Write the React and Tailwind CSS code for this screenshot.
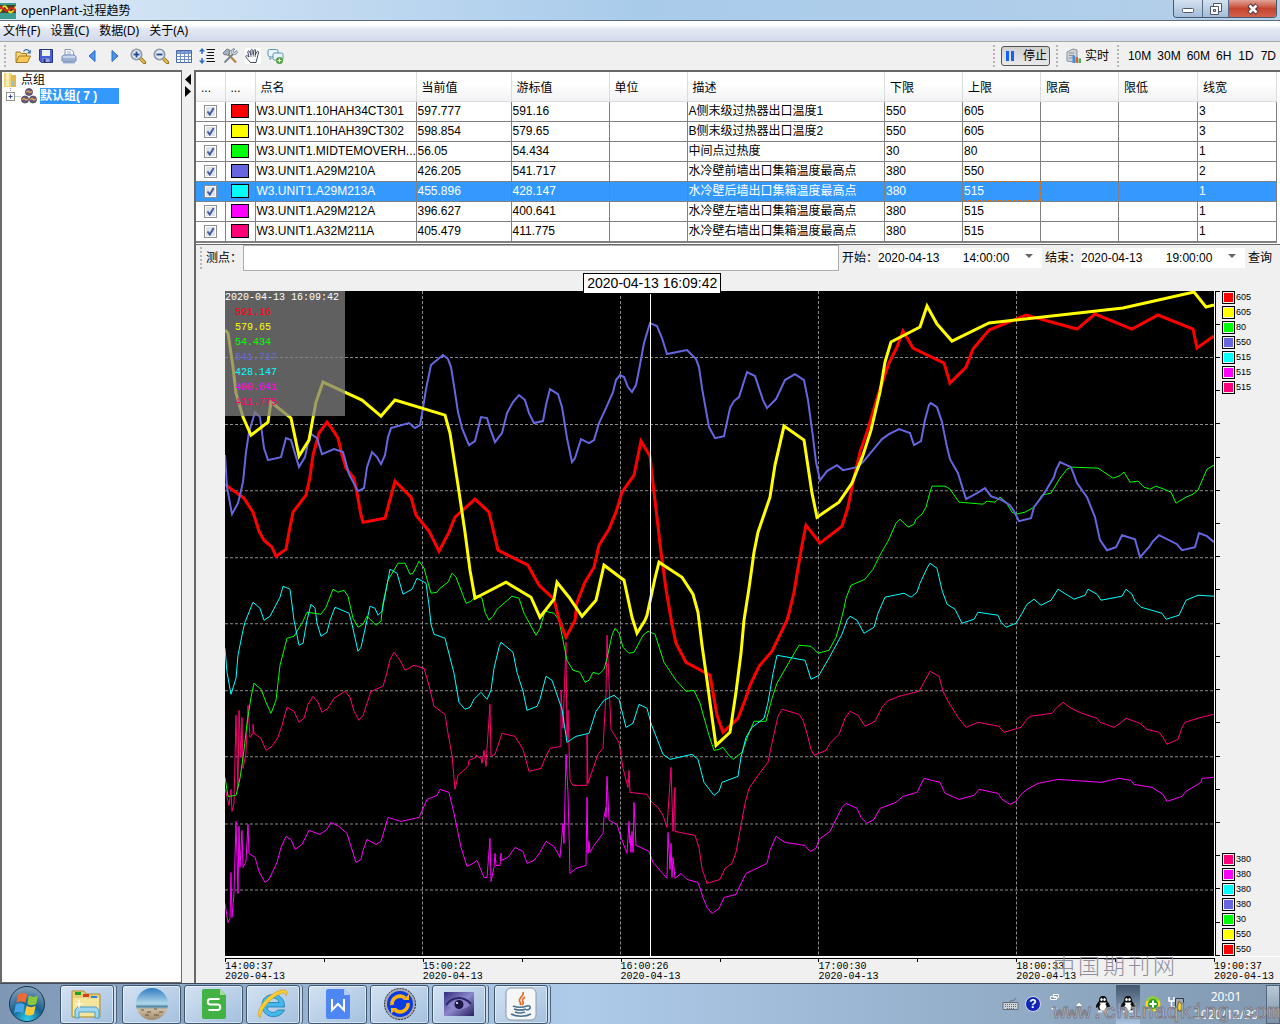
import React from "react";

const SERIES = [
  { color: "#ff0078", w: 1, d: "225,788 229,805 231,789 232,811 234,803 236,715 238,788 239,710 241,757 242,717 243,768 246,753 248,705 250,737 253,733 253,724 254,733 261,738 266,750 272,746 278,737 282,725 287,707 294,711 299,722 304,718 308,704 313,696 318,702 322,712 328,708 334,698 345,691 350,697 354,711 359,720 363,715 371,691 383,686 387,672 390,659 394,652 400,660 405,670 414,665 424,668 429,685 434,706 445,714 448,733 452,755 455,789 458,775 468,766 469,760 476,757 476,755 481,758 482,763 484,750 486,766 487,748 490,704 491,756 495,754 502,733 515,736 523,749 529,771 541,768 545,758 550,748 561,746 561,690 563,728 566,642 567,740 568,710 570,780 573,785 587,785 587,734 588,783 598,754 603,748 606,693 607,635 611,729 619,742 623,768 628,787 629,770 630,792 647,794 652,802 658,807 663,815 667,827 671,767 673,831 675,787 675,831 695,835 699,847 702,868 707,883 720,879 725,868 732,863 736,852 741,825 745,803 749,788 758,775 768,762 771,747 778,716 782,709 799,714 803,720 807,733 811,749 814,755 826,750 830,743 839,734 845,718 850,711 858,715 865,726 875,721 882,707 887,701 899,696 919,691 930,671 939,676 943,691 948,701 958,717 966,727 978,722 999,726 1004,732 1021,727 1026,720 1030,716 1052,713 1057,707 1063,702 1071,708 1082,713 1097,718 1100,722 1114,727 1120,723 1126,718 1140,723 1147,729 1159,732 1163,737 1167,744 1178,739 1182,727 1185,722 1201,717 1214,714" },
  { color: "#ff00ff", w: 1, d: "225,903 228,922 230,918 231,872 232,917 234,893 236,821 238,893 239,826 240,867 242,830 243,867 246,861 248,824 249,853 255,857 259,871 265,882 269,879 277,862 281,847 286,836 291,839 295,849 302,844 309,830 320,834 327,829 331,822 339,826 347,833 350,843 356,862 361,859 363,850 367,839 376,844 381,841 388,817 401,821 419,817 427,799 437,795 440,789 449,792 454,813 461,847 467,866 473,863 477,860 484,877 487,877 490,838 491,881 494,867 495,853 496,865 500,865 501,853 501,860 508,857 515,847 523,851 527,863 534,860 540,852 546,841 554,846 560,857 563,823 564,843 566,754 568,793 570,873 576,868 586,865 587,797 588,853 589,841 590,852 594,845 603,833 604,817 606,807 606,817 607,776 609,820 617,824 621,837 627,853 629,821 630,843 630,835 631,852 632,831 633,852 634,802 636,845 649,851 653,862 667,878 668,832 670,869 671,843 672,877 673,857 675,878 681,873 687,879 698,882 703,897 707,907 712,913 719,908 724,897 736,894 741,883 746,873 767,863 770,850 776,836 785,842 805,845 810,851 816,848 819,839 830,831 842,807 846,803 857,808 861,817 867,823 874,819 880,808 896,802 903,796 917,792 924,778 940,782 945,793 959,799 974,795 979,789 998,793 1002,799 1010,804 1016,801 1021,794 1027,789 1038,783 1058,779 1101,782 1119,778 1131,780 1134,784 1152,787 1163,794 1167,801 1182,796 1186,791 1201,782 1202,778 1214,777" },
  { color: "#00ff00", w: 1, d: "225,777 228,796 236,795 240,778 244,750 247,723 251,697 254,683 261,689 266,702 271,713 276,700 280,665 287,638 294,636 303,621 307,612 321,614 326,607 333,589 338,592 344,590 348,596 353,618 358,627 363,624 367,616 376,625 381,621 383,603 388,580 398,563 405,563 410,574 413,573 419,561 424,568 431,593 437,592 440,588 448,582 452,573 456,577 466,603 471,601 477,595 482,598 485,612 489,620 493,616 497,609 512,596 519,598 524,613 536,635 540,628 545,611 554,613 559,620 567,660 573,670 580,672 585,682 589,680 593,672 599,674 604,669 607,658 612,635 615,628 619,633 623,647 629,653 634,652 643,635 648,631 655,634 664,662 676,680 686,691 694,690 700,703 709,735 714,750 719,749 723,747 729,755 733,759 742,752 748,735 754,721 766,721 772,698 777,683 789,662 799,645 811,646 818,653 829,650 836,637 841,620 844,608 846,598 851,585 865,579 873,569 881,553 888,541 896,523 900,519 908,527 914,524 916,519 922,514 926,507 930,492 932,486 945,486 950,489 959,502 983,504 987,501 995,502 1000,497 1006,502 1012,512 1016,514 1025,512 1034,507 1042,495 1051,493 1060,478 1067,469 1072,467 1098,468 1113,478 1119,476 1124,472 1130,482 1138,481 1144,487 1150,489 1156,486 1164,489 1171,492 1176,503 1186,497 1193,494 1198,490 1203,478 1207,469 1214,465" },
  { color: "#00ffff", w: 1, d: "225,648 227,672 231,694 236,678 238,655 243,630 245,622 253,602 260,608 264,620 270,616 280,597 283,586 290,589 294,620 299,645 303,643 307,620 311,604 315,608 317,623 321,636 327,632 330,620 335,607 349,613 352,624 358,651 361,647 367,620 370,606 375,608 378,615 382,611 387,585 390,569 397,573 403,594 412,589 417,578 426,583 429,605 431,624 434,634 445,638 454,673 459,702 465,709 470,707 474,699 481,692 487,699 491,690 494,668 499,647 501,642 513,652 517,672 523,691 527,710 537,706 540,699 546,676 552,680 562,709 567,742 576,736 589,733 596,711 604,700 614,695 619,699 626,727 633,723 639,704 647,708 651,723 663,754 670,759 692,754 698,759 704,782 714,795 719,791 722,782 738,776 741,757 746,737 752,727 764,718 768,702 773,673 777,655 805,660 811,679 819,675 830,656 842,634 847,620 850,616 857,620 864,633 874,627 878,613 885,597 904,593 911,597 917,592 920,583 927,568 930,563 937,568 942,590 947,604 955,609 962,623 974,619 978,612 998,615 1001,622 1006,627 1016,623 1022,613 1027,604 1034,599 1041,605 1051,600 1058,589 1074,599 1085,595 1088,589 1097,594 1101,600 1122,596 1126,589 1132,594 1135,601 1141,607 1162,613 1166,619 1179,615 1186,600 1198,595 1214,596" },
  { color: "#ff0000", w: 3, d: "225,484 230,488 244,498 253,512 259,531 264,540 272,547 276,556 286,549 289,532 293,512 306,495 310,477 313,455 319,433 327,422 333,430 338,438 342,455 346,468 354,478 357,493 361,515 363,522 385,518 395,481 411,497 416,515 429,531 439,551 449,532 455,517 475,499 489,512 494,533 498,550 528,565 539,585 554,599 559,619 566,637 575,620 577,602 585,582 594,567 599,545 609,529 616,512 622,492 634,475 641,441 650,456 654,492 661,552 666,589 672,624 676,643 686,662 710,675 717,715 723,732 738,718 745,700 750,685 759,666 772,651 787,620 789,613 794,592 798,568 802,545 806,525 820,543 842,526 848,507 853,482 860,452 867,432 878,395 889,363 897,347 903,331 913,348 944,363 950,383 966,367 973,349 989,330 1026,315 1077,329 1095,314 1132,329 1158,315 1193,329 1197,348 1214,336" },
  { color: "#6666e0", w: 2, d: "225,455 227,487 232,514 238,503 243,482 246,452 249,432 255,412 260,417 264,448 268,460 281,457 286,438 291,440 299,467 305,457 310,433 317,438 322,454 334,449 343,452 349,474 358,491 364,488 367,467 372,452 377,457 381,464 385,455 388,437 391,428 409,423 415,428 420,425 423,408 426,389 431,365 443,355 448,359 451,367 455,392 458,412 462,428 469,445 475,441 481,417 487,418 490,428 495,442 502,433 507,413 513,402 519,395 525,400 529,413 534,423 543,421 546,405 550,389 558,394 562,407 567,438 572,462 575,458 581,439 589,443 594,440 599,423 606,408 613,392 616,380 620,375 624,377 628,387 632,392 636,385 639,370 644,343 650,323 657,326 662,338 667,354 687,350 696,359 699,367 702,388 709,427 715,438 724,436 730,408 734,401 739,397 747,372 755,376 763,400 767,408 776,399 785,380 795,374 804,380 808,400 813,437 816,462 820,480 827,471 837,465 843,470 857,467 863,462 882,439 889,434 899,429 910,433 914,445 921,441 925,420 929,405 931,403 937,407 942,422 947,447 950,459 958,473 966,499 977,493 985,488 991,496 1002,500 1010,505 1014,511 1019,521 1031,518 1034,507 1043,495 1054,477 1056,470 1060,462 1071,467 1077,483 1087,497 1095,517 1100,540 1107,550 1116,547 1122,535 1135,539 1140,557 1149,547 1153,541 1159,535 1177,544 1182,550 1195,547 1199,533 1207,536 1214,542" },
  { color: "#ffff00", w: 3, d: "225,330 228,333 233,367 236,393 243,417 251,435 268,422 271,402 291,418 299,456 309,440 313,418 316,402 323,382 362,400 381,416 395,400 445,415 450,433 458,485 465,532 470,570 475,598 506,582 531,597 540,617 554,599 557,582 569,597 582,616 596,600 604,565 624,580 632,617 637,633 645,620 647,615 655,578 659,562 682,577 693,594 698,612 702,645 707,680 712,717 716,745 730,732 736,692 741,653 744,620 749,588 754,552 758,532 770,497 775,465 784,426 804,440 812,493 817,517 839,502 852,483 863,455 871,430 880,392 885,362 891,342 920,327 927,306 937,324 952,341 989,323 1123,308 1194,292 1206,307 1214,305" },
];

const ROWS = [
  { c: "#ff0000", v: ["W3.UNIT1.10HAH34CT301", "597.777", "591.16", "", "A侧末级过热器出口温度1", "550", "605", "", "", "3"] },
  { c: "#ffff00", v: ["W3.UNIT1.10HAH39CT302", "598.854", "579.65", "", "B侧末级过热器出口温度2", "550", "605", "", "", "3"] },
  { c: "#00ff00", v: ["W3.UNIT1.MIDTEMOVERH...", "56.05", "54.434", "", "中间点过热度", "30", "80", "", "", "1"] },
  { c: "#6666e0", v: ["W3.UNIT1.A29M210A", "426.205", "541.717", "", "水冷壁前墙出口集箱温度最高点", "380", "550", "", "", "2"] },
  { c: "#00ffff", v: ["W3.UNIT1.A29M213A", "455.896", "428.147", "", "水冷壁后墙出口集箱温度最高点", "380", "515", "", "", "1"], sel: true },
  { c: "#ff00ff", v: ["W3.UNIT1.A29M212A", "396.627", "400.641", "", "水冷壁左墙出口集箱温度最高点", "380", "515", "", "", "1"] },
  { c: "#ff0078", v: ["W3.UNIT1.A32M211A", "405.479", "411.775", "", "水冷壁右墙出口集箱温度最高点", "380", "515", "", "", "1"] },
];
const HEADS = ["点名", "当前值", "游标值", "单位", "描述", "下限", "上限", "限高", "限低", "线宽"];
const COLS = ["w-[29px]", "w-[30px]", "w-[161px]", "w-[95px]", "w-[98px]", "w-[78px]", "w-auto", "w-[78px]", "w-[78px]", "w-[78px]", "w-[79px]", "w-[79px]"];
const TIMES = ["14:00:37", "15:00:22", "16:00:26", "17:00:30", "18:00:33"];
const HOURS = [422.5, 620.5, 818.5, 1016.5];
const LEVELS = [357.5, 424.5, 490.5, 557.5, 623.5, 690.5, 756.5, 823.5, 889.5];

function Svg({ children, w = 16, h = 16, vb, className = "" }) {
  return (
    <svg width={w} height={h} viewBox={vb || `0 0 ${w} ${h}`} className={"block shrink-0 " + className} aria-hidden="true">
      {children}
    </svg>
  );
}

function Grip() {
  return (
    <Svg w={2} h={24} className="mx-1">
      {[0, 4, 8, 12, 16, 20].map((y) => (
        <rect key={y} x="0" y={y + 1} width="2" height="2" fill="#b5b5b5" />
      ))}
    </Svg>
  );
}

function Tool({ label, children }) {
  return (
    <button type="button" aria-label={label} className="flex h-6 w-[23px] items-center justify-center">
      {children}
    </button>
  );
}

function Lens({ plus }) {
  return (
    <Svg>
      <path d="M10 10l4.5 4.5" stroke="#8d6a22" strokeWidth="3.6" strokeLinecap="round" />
      <path d="M10.2 10.2l4 4" stroke="#f0b83c" strokeWidth="2" strokeLinecap="round" />
      <circle cx="6.5" cy="6.5" r="5.2" fill="#dfe9f2" stroke="#8d99a6" strokeWidth="1.6" />
      <path d="M3.5 6.5h6" stroke="#20489a" strokeWidth="1.8" />
      {plus && <path d="M6.5 3.5v6" stroke="#20489a" strokeWidth="1.8" />}
    </Svg>
  );
}

function Toolbar() {
  return (
    <div className="flex h-[28px] shrink-0 items-center bg-[#f0f0f0]">
      <Grip />
      <div className="flex flex-1 items-center pl-px">
        <Tool label="打开">
          <Svg>
            <path d="M1 14V4h4l1.500 1.500h5V8" fill="#f7d878" stroke="#a87820" />
            <path d="M1 14.500L4 8h11.500l-3 6.500z" fill="#fbc954" stroke="#a87820" />
            <path d="M8.500 3.500c1.500-2.500 4-2.500 5.500-.5" fill="none" stroke="#3c6ca8" strokeWidth="1.300" />
            <path d="M15.800 1.500v4h-4z" fill="#3c6ca8" />
          </Svg>
        </Tool>
        <Tool label="保存">
          <Svg>
            <path d="M1.500 1.500h13v13h-11l-2-2z" fill="#4a5fd0" stroke="#27348c" />
            <path d="M4 2h8v6H4z" fill="#eef2fc" />
            <path d="M4.500 10.500h7V14h-7z" fill="#9aa6e4" />
            <path d="M5.500 11h2v3h-2z" fill="#1d2768" />
          </Svg>
        </Tool>
        <Tool label="打印">
          <Svg>
            <path d="M4 8V1.500h6L12.500 4v4" fill="#fff" stroke="#8395b5" />
            <path d="M6 4h4M6 6h4" stroke="#9cb0d0" />
            <path d="M1 8.500l2-1.500h10l2 1.500v4.500H1z" fill="#c8d8ee" stroke="#6c86b4" />
            <path d="M1.500 11h13" stroke="#6c86b4" />
            <path d="M2.500 13.500h11v1.500h-11z" fill="#a4bbdc" stroke="#6c86b4" strokeWidth=".6" />
          </Svg>
        </Tool>
        <Tool label="后退">
          <Svg><path d="M11 2.500v11L5 8z" fill="#4b94ea" stroke="#2468c0" /></Svg>
        </Tool>
        <Tool label="前进">
          <Svg><path d="M5 2.500v11L11 8z" fill="#4b94ea" stroke="#2468c0" /></Svg>
        </Tool>
        <Tool label="放大"><Lens plus /></Tool>
        <Tool label="缩小"><Lens /></Tool>
        <Tool label="表格">
          <Svg>
            <path d="M.5 2.500h15v12H.5z" fill="#fff" stroke="#47669e" />
            <path d="M1 3h14v2.500H1z" fill="#7d9ed8" />
            <path d="M.5 8.500h15M.5 11.500h15M.5 5.500h15M4.500 3v11.500M8.500 3v11.500M12.500 3v11.500" stroke="#6f8fc6" />
          </Svg>
        </Tool>
        <Tool label="排序">
          <Svg>
            <path d="M3 1v5M3 10v5" stroke="#2a6cc8" strokeWidth="1.500" />
            <path d="M3 0l3 3.500H0zM3 16l3-3.500H0z" fill="#2a6cc8" />
            <path d="M7.500 1.500H16M8.500 4.500H15M7.500 7.500H15M7.500 10.500H15M7.500 13.500H16" stroke="#111" strokeWidth="1.200" />
          </Svg>
        </Tool>
        <Tool label="工具">
          <Svg>
            <path d="M6 6l8 8.500" stroke="#b98546" strokeWidth="2.200" />
            <path d="M1 5l4-4 3.500 1.500-1.500 1.500 1 1-2.500 2.500-1.500-1L2.500 7z" fill="#a4b0be" stroke="#5d6874" strokeWidth=".8" />
            <path d="M2.500 14.500L11 6" stroke="#7a8692" strokeWidth="2" />
            <path d="M14.500 2.500L12.500 4.500 11 3l2-2c-3-.8-4.500 2-3.500 4s4.500 2.500 6-.5z" fill="#c6d0da" stroke="#66727e" strokeWidth=".7" />
          </Svg>
        </Tool>
        <Tool label="平移">
          <Svg className="bg-white">
            <path d="M5.500 14.500C4 12.500 1 10 .8 8.500.8 7.300 2.200 7.300 4 9L2.800 4.200c-.2-1.500 1.300-1.800 1.800-.4L6 7 5.800 2.500C5.800 1 7.500 1 7.700 2.500L8.200 6.500l.8-4C9.300 1 10.900 1.300 10.700 2.900L10.200 7l1.700-3c.8-1.300 2.200-.5 1.700.8-.8 2-1.200 4-1.600 6.200l-1 3.500z" fill="#fff" stroke="#2d3450" strokeWidth=".9" />
            <path d="M6 7v2M8.200 6.500v2M10.200 7v2" stroke="#2d3450" strokeWidth=".7" />
          </Svg>
        </Tool>
        <Tool label="备注">
          <Svg w={17} h={17}>
            <rect x="1" y="1.500" width="10" height="7" rx="1.500" fill="#e8f3fa" stroke="#5b93b4" />
            <path d="M3 8.500v3l3-3" fill="#e8f3fa" stroke="#5b93b4" />
            <rect x="6" y="5" width="10" height="7" rx="1.500" fill="#e8f3fa" stroke="#5b93b4" />
            <circle cx="12.500" cy="12.500" r="3.500" fill="#4ca03c" />
            <path d="M12.500 10.500v4M10.500 12.500h4" stroke="#fff" strokeWidth="1.200" />
          </Svg>
        </Tool>
      </div>
      <Grip />
      <button type="button" className="mx-[2px] flex h-5 w-[49px] items-center gap-2 rounded-[3px] border border-[#555] bg-gradient-to-b from-[#cfcfcf] to-[#e9e9e9] pl-1">
        <Svg w={9} h={10}><path d="M0 0h3v10H0zM5 0h3v10H5z" fill="#1560f0" /></Svg>
        <span>停止</span>
      </button>
      <Grip />
      <button type="button" className="flex items-center gap-1 pr-1 pl-1">
        <Svg w={15}>
          <path d="M1 4l6-3 4 1v10l-4 2-6-1z" fill="#cdd2d6" stroke="#8d9499" />
          <path d="M3 5h5M3 7.500h5M3 10h5" stroke="#8d9499" />
          <path d="M6.500 7.500h2.500V15H6.500z" fill="#3f8fe8" />
          <path d="M9.500 9H12v6H9.500z" fill="#e85a30" />
          <path d="M12.500 10.500H15V15h-2.500z" fill="#49b04c" />
        </Svg>
        <span>实时</span>
      </button>
      <Grip />
      <div className="flex items-center pl-[2px]">
        {["10M", "30M", "60M"].map((t) => (
          <button type="button" key={t} className="px-[3px]">{t}</button>
        ))}
        {["6H", "1D", "7D"].map((t) => (
          <button type="button" key={t} className="pr-1 pl-[3px]">{t}</button>
        ))}
      </div>
    </div>
  );
}

function TitleBar() {
  return (
    <header className="flex h-[21px] shrink-0 items-start border-b border-[#5c6b7a] bg-gradient-to-r from-[#dbe9f6] via-[#a9cbeb] to-[#b4cfe9]">
      <Svg className="mt-[3px]">
        <path d="M0 0h16v16H0z" fill="#3c9d90" />
        <path d="M0 2h16v8H0z" fill="#45432a" />
        <path d="M0 9c4-9 6-6 8-2s5 3 8-4" fill="none" stroke="#f0e21c" strokeWidth="1.800" />
        <path d="M0 4c3 0 4 6 8 3s5-3 8 2" fill="none" stroke="#e0261c" strokeWidth="1.800" />
      </Svg>
      <h1 className="flex-1 pl-[5px] font-['Noto_Sans','Noto_Sans_CJK_SC',sans-serif] leading-[21px] font-normal">openPlant-过程趋势</h1>
      <div className="mr-[3px] flex h-[18px] overflow-hidden rounded-b-[4px] border border-t-0 border-[#47586e]">
        <button type="button" aria-label="最小化" className="flex w-[29px] items-center justify-center border-r border-[#5a6c84] bg-gradient-to-b from-[#d4e1ef] to-[#a3bdd8]">
          <Svg w={14} h={14}><rect x="1.500" y="6.500" width="11" height="4" rx="1" fill="#fff" stroke="#505866" /></Svg>
        </button>
        <button type="button" aria-label="还原" className="flex w-[26px] items-center justify-center border-r border-[#5a6c84] bg-gradient-to-b from-[#d4e1ef] to-[#a3bdd8]">
          <Svg w={14} h={14}>
            <path d="M4.500 1.500h8v8h-8z" fill="#fff" stroke="#505866" />
            <path d="M1.500 4.500h8v8h-8z" fill="#fff" stroke="#505866" />
            <path d="M4.500 7.500h2v2h-2z" fill="#a9c0d8" stroke="#505866" />
          </Svg>
        </button>
        <button type="button" aria-label="关闭" className="flex w-[47px] items-center justify-center bg-gradient-to-b from-[#e0a498] via-[#c5452f] to-[#d2604c]">
          <Svg w={14} h={14}>
            <path d="M3 3l8 8M11 3l-8 8" stroke="#4c3340" strokeWidth="4.600" />
            <path d="M3.500 3.500l7 7M10.500 3.500l-7 7" stroke="#fff" strokeWidth="2.600" />
          </Svg>
        </button>
      </div>
    </header>
  );
}

function Tree() {
  return (
    <aside className="w-[182px] shrink-0 border-2 border-r border-b border-[#696969] bg-white">
      <ul className="pl-px">
        <li>
          <div className="flex h-4 items-center gap-[2px]">
            <Svg>
              <path d="M1 1h7l1 2v12H1z" fill="#f2d573" />
              <path d="M8 3h5v12H8z" fill="#e3b84c" />
              <path d="M3 1h3v13H3z" fill="#fbeeb4" />
              <path d="M9 9h2v5H9z" fill="#8ac4e4" />
            </Svg>
            <span>点组</span>
          </div>
          <ul>
            <li className="flex h-4 items-center pl-[3px]">
              <Svg w={15} h={16}>
                <path d="M4.500 0v4M9.500 8.500H15" stroke="#999" strokeDasharray="1 1" />
                <rect x=".5" y="4.500" width="8" height="8" fill="#fff" stroke="#919191" />
                <path d="M2.500 8.500h4M4.500 6.500v4" stroke="#2c4a9c" />
              </Svg>
              <Svg>
                {[[8, 4], [4, 11.500], [12, 11.500]].map(([x, y]) => (
                  <g key={x}>
                    <circle cx={x} cy={y} r="3.600" fill="#665a78" stroke="#3a3248" strokeWidth=".6" />
                    <path d={`M${x - 3} ${y}l2-1 2 1.500 2-1`} fill="none" stroke="#f0a858" strokeWidth="1.300" />
                  </g>
                ))}
              </Svg>
              <a href="#group" className="ml-[3px] block h-4 w-[79px] bg-[#3399ff] leading-4 font-bold whitespace-pre text-white">默认组( 7 )</a>
            </li>
          </ul>
        </li>
      </ul>
    </aside>
  );
}

function PointTable() {
  return (
    <table className="w-full table-fixed border-collapse border-b-2 border-[#808080] bg-white">
      <colgroup>
        {COLS.map((c, i) => <col key={i} className={c} />)}
      </colgroup>
      <thead>
        <tr className="h-[29px] bg-gradient-to-b from-white from-40% to-[#f1f2f4]">
          {["...", "..."].concat(HEADS).map((h, i) => (
            <th key={i} className="border-r border-b border-[#dcdcdc] p-0 pt-1 pl-[5px] text-left font-normal">{h}</th>
          ))}
        </tr>
      </thead>
      <tbody>
        {ROWS.map((r) => (
          <tr key={r.c} className={r.sel ? "h-5 bg-[#3399ff] text-white" : "h-5"}>
            <td className="border border-l-0 border-[#808080] p-0">
              <label className="relative mx-auto block size-[13px]">
                <input type="checkbox" defaultChecked aria-label={r.v[0]} className="block size-[13px] appearance-none border border-[#8e8f8f] bg-[#dfe4ea] shadow-[inset_0_0_0_1px_#fff]" />
                <Svg w={13} h={13} className="pointer-events-none absolute inset-0">
                  <path d="M3.500 6.500l2.300 3L9.700 3" fill="none" stroke="#41599c" strokeWidth="1.900" />
                </Svg>
              </label>
            </td>
            <td className="border border-[#808080] p-0">
              <div className="mx-auto h-[14px] w-[18px] border border-black" style={{ background: r.c }} />
            </td>
            {r.v.map((t, i) => (
              <td key={i} className={"border border-[#808080] p-0 pl-px leading-[19px] whitespace-nowrap" + (r.sel && i === 6 ? " relative z-10 outline-1 -outline-offset-1 outline-dashed outline-[#e07000]" : "")}>
                {t}
              </td>
            ))}
          </tr>
        ))}
      </tbody>
    </table>
  );
}

function When({ label, id, value }) {
  return (
    <div className="flex shrink-0 items-center">
      <label htmlFor={id} className="w-[36px] whitespace-nowrap">{label}</label>
      <div className="relative">
        <select id={id} className="block h-5 w-[164px] appearance-none bg-white">
          <option>{value}</option>
        </select>
        <Svg w={8} h={4} className="pointer-events-none absolute top-[6px] right-[9px]"><path d="M0 0h8L4 4z" fill="#666" /></Svg>
      </div>
    </div>
  );
}

function Keys({ items }) {
  return (
    <ul className="flex flex-col gap-[2px]">
      {items.map(([c, t]) => (
        <li key={c} className="flex h-[13px] items-start">
          <span className="block size-[13px] border border-black p-px"><span className="block size-full" style={{ background: c }} /></span>
          <span className="pl-px text-[9px] leading-[13px]">{t}</span>
        </li>
      ))}
    </ul>
  );
}

function Chart() {
  return (
    <div className="flex min-h-0 flex-1 flex-col pt-[19px] pl-[29px]">
      <div className="flex min-h-0 flex-1">
        <div className="relative flex min-w-0 flex-1 bg-black">
          <svg viewBox="225 291 989 665" preserveAspectRatio="none" className="block h-full min-h-0 w-full" role="img" aria-label="过程趋势">
            <g stroke="#8c8c8c" strokeDasharray="3 2">
              {HOURS.map((x) => <path key={x} d={`M${x} 291V956`} />)}
              {LEVELS.map((y) => <path key={y} d={`M225 ${y}H1214`} />)}
            </g>
            {SERIES.map((s) => (
              <polyline key={s.color} points={s.d} fill="none" stroke={s.color} strokeWidth={s.w} vectorEffect="non-scaling-stroke" />
            ))}
            <path d="M650.500 293V956" stroke="#fff" />
          </svg>
          <div className="absolute top-0 left-0 h-[125px] w-[120px] bg-[#808080]/75 font-['Liberation_Mono',monospace] text-[10px] leading-[15px] whitespace-nowrap">
            <p className="-mt-px text-white">2020-04-13 16:09:42</p>
            {ROWS.map((r) => <p key={r.c} className="pl-[10px]" style={{ color: r.c }}>{r.v[2]}</p>)}
          </div>
          <div className="absolute -top-[18px] left-[43.2%] -translate-x-1/2 border border-black bg-white px-[3px] text-[14px] leading-[19px] whitespace-nowrap">
            2020-04-13 16:09:42
          </div>
        </div>
        <div className="flex w-[66px] shrink-0 border-l border-white">
          <div className="flex w-[5px] flex-col border-b border-l border-black">
            {Array.from({ length: 20 }, (_, i) => (
              <div key={i} className="flex-1 border-t border-black" />
            ))}
          </div>
          <div className="flex flex-col justify-between pl-[2px]">
            <Keys items={ROWS.map((r) => [r.c, r.v[6]])} />
            <Keys items={ROWS.map((r) => [r.c, r.v[5]]).reverse()} />
          </div>
        </div>
      </div>
      <div className="relative h-[27px] shrink-0 border-t border-white">
        <div className="mt-px mr-[65px] flex h-1 border-t border-r border-black">
          {Array.from({ length: 10 }, (_, i) => (
            <div key={i} className="flex-1 border-l border-black" />
          ))}
        </div>
        <div className="flex font-['Liberation_Mono',monospace] text-[10px] leading-[10px] whitespace-nowrap">
          {TIMES.map((t) => (
            <p key={t} className="min-w-0 flex-1">{t}<br />2020-04-13</p>
          ))}
          <p className="w-[66px]">19:00:37<br />2020-04-13</p>
        </div>
        <div className="absolute -top-[8px] right-[105px] flex gap-[3px] font-['Noto_Sans_CJK_SC',sans-serif] text-[22px] leading-[30px] font-light text-[#8e8e9c]">
          {"中国期刊网".split("").map((c) => <span key={c}>{c}</span>)}
        </div>
      </div>
    </div>
  );
}

function Task({ label, wide, stacked, children }) {
  return (
    <button
      type="button"
      aria-label={label}
      className={
        "flex h-[39px] items-center justify-center rounded-[3px] border border-[#3f566f] bg-gradient-to-br from-[#d3e2f2] to-[#a4c0de] ring-1 ring-white/50 ring-inset " +
        (wide ? "w-[59px] " : "w-[54px] ") +
        (stacked ? "mr-[5px] shadow-[2px_0_0_#c4d8ee,3px_0_0_#4d647e]" : "")
      }
    >
      {children}
    </button>
  );
}

function Penguin() {
  return (
    <Svg w={16} h={18}>
      <path d="M8 1c3 0 4 2 4 5 2 2 3.500 5 3 7l-2-1c0 1-.5 2-1 3H4c-.5-1-1-2-1-3l-2 1c-.5-2 1-5 3-7 0-3 1-5 4-5z" fill="#0c0c0c" />
      <ellipse cx="8" cy="12" rx="3.500" ry="3.500" fill="#fff" />
      <ellipse cx="6.500" cy="4.500" rx="1.200" ry="1.500" fill="#fff" />
      <ellipse cx="9.500" cy="4.500" rx="1.200" ry="1.500" fill="#fff" />
      <path d="M4.500 7.500h7l-1 1.500h-5z" fill="#fff" />
      <path d="M3 15.500h4v2H3zM9 15.500h4v2H9z" fill="#e8e8e8" />
    </Svg>
  );
}

function Taskbar() {
  return (
    <footer className="relative flex h-[41px] shrink-0 items-center gap-[3px] overflow-hidden border-t border-[#3e4c5e] bg-gradient-to-r from-[#7e97b4] via-[#aecbea] via-45% to-[#8199b1]">
      <button type="button" aria-label="开始" className="mr-[11px] ml-2">
        <Svg w={38} h={38}>
          <defs>
            <radialGradient id="orb" cx=".5" cy=".95" r=".9">
              <stop offset="0" stopColor="#2fd0f0" />
              <stop offset=".5" stopColor="#17618e" />
              <stop offset="1" stopColor="#7c9cb8" />
            </radialGradient>
          </defs>
          <circle cx="19" cy="19" r="17.500" fill="url(#orb)" stroke="#17344e" />
          <g transform="translate(-3 -3.800) scale(1.200)">
            <path d="M11 11c3-1.500 5-1.500 7.500 0l-1.500 7c-2.500-1.500-5-1.500-7.500 0z" fill="#ee6a34" />
            <path d="M20 12c2.500 1.500 5 1.500 7.500 0L26 19c-2.500 1.500-5 1.500-7.500 0z" fill="#8cc83c" />
            <path d="M9 19.500c2.500-1.500 5-1.500 7.500 0L15 26.500c-2.500-1.500-5-1.500-7.500 0z" fill="#48a4e8" />
            <path d="M18 20.500c2.500 1.500 5 1.500 7.500 0l-1.500 7c-2.500 1.500-5 1.500-7.500 0z" fill="#fcc93c" />
          </g>
        </Svg>
      </button>
      <Task label="资源管理器" stacked>
        <Svg w={34} h={32}>
          <path d="M2 3h12l2 3h14v23H2z" fill="#e9cf74" stroke="#b09030" />
          <path d="M5 4h6v3H5z" fill="#22a02c" /><path d="M13 6h6v3h-6z" fill="#d8401c" /><path d="M21 8h6v3h-6z" fill="#2c84d8" />
          <path d="M3 10h26v18H3z" fill="#f5e49c" />
          <path d="M5 30V22l3-3h18l3 3v8h-4v-6H9v6z" fill="#9cd8f0" stroke="#4f9cc4" />
          <path d="M9 12v8M5 16h8" stroke="#fff" strokeWidth="1.200" />
        </Svg>
      </Task>
      <Task label="海滩" wide>
        <Svg w={32} h={32}>
          <defs>
            <linearGradient id="sea" x1="0" y1="0" x2="0" y2="1">
              <stop offset="0" stopColor="#2f7cc4" /><stop offset=".5" stopColor="#b4d8ea" />
              <stop offset=".58" stopColor="#4d87a8" /><stop offset=".66" stopColor="#d0c0a4" /><stop offset="1" stopColor="#a08868" />
            </linearGradient>
          </defs>
          <circle cx="16" cy="16" r="16" fill="url(#sea)" />
          <path d="M5 22h3m3 2h4m3-3h3m2 3h4M9 27h4m5 0h5" stroke="#6a5444" />
        </Svg>
      </Task>
      <Task label="表格" wide>
        <Svg w={26} h={32}>
          <path d="M3 1h16l6 6v22a2 2 0 0 1-2 2H3a2 2 0 0 1-2-2V3a2 2 0 0 1 2-2z" fill="#43b244" />
          <path d="M19 1v6h6z" fill="#a4dca0" />
          <path d="M18.500 11h-9a2.500 2.500 0 0 0 0 5.500h7a2.500 2.500 0 0 1 0 5.500h-9" fill="none" stroke="#fff" strokeWidth="2" />
        </Svg>
      </Task>
      <Task label="浏览器" stacked>
        <Svg w={32} h={32}>
          <path d="M24 19H10c.5 6 8 7 10.500 3h7C23 32 5 31 5 17S27 3 27.500 17v2zM10 14.500h12c-1-6-11-6-12 0z" fill="#45b8ea" stroke="#1c78b4" strokeWidth=".8" />
          <path d="M3 30C-3 24 10 5 25 2c5-1 6 2 4 6 0-3-2-4-6-2C13 10 4 21 3 30z" fill="#f9cf32" stroke="#d89c18" strokeWidth=".7" />
        </Svg>
      </Task>
      <Task label="文字" wide>
        <Svg w={26} h={32}>
          <path d="M3 1h16l6 6v22a2 2 0 0 1-2 2H3a2 2 0 0 1-2-2V3a2 2 0 0 1 2-2z" fill="#4e87f4" />
          <path d="M19 1v6h6z" fill="#b0ccfc" />
          <path d="M7 11v11l6-6 6 6V11" fill="none" stroke="#fff" strokeWidth="2" />
        </Svg>
      </Task>
      <Task label="同步" wide>
        <Svg w={34} h={34}>
          <circle cx="17" cy="17" r="15.500" fill="#a8a8b0" stroke="#222" strokeDasharray="2 1" />
          <circle cx="17" cy="17" r="13" fill="#0c3ce0" />
          <path d="M9 18a8 8 0 0 1 13-7M25 16a8 8 0 0 1-13 7" fill="none" stroke="#fcb414" strokeWidth="3.600" />
          <path d="M20 13h6V7zM14 21H8v6z" fill="#fcb414" />
        </Svg>
      </Task>
      <Task label="图像" stacked>
        <Svg w={30} h={24}>
          <defs>
            <linearGradient id="eye" x1="0" y1="0" x2="1" y2="1"><stop offset="0" stopColor="#302c80" /><stop offset=".5" stopColor="#8c88cc" /><stop offset="1" stopColor="#26205c" /></linearGradient>
          </defs>
          <path d="M0 0h30v24H0z" fill="url(#eye)" />
          <path d="M4 14c5-8 16-8 22-1-6 6-16 6-22 1z" fill="#8a86cc" />
          <circle cx="15" cy="12.500" r="4.500" fill="#1c1848" />
          <path d="M2 13C8 4 20 4 27 12" fill="none" stroke="#2a2464" strokeWidth="2" />
          <circle cx="13" cy="11" r="1" fill="#fff" />
        </Svg>
      </Task>
      <Task label="Java" stacked>
        <Svg w={32} h={34}>
          <rect x="1" y="1" width="30" height="32" rx="5" fill="#f4f6f8" stroke="#8a99a8" />
          <path d="M18 5c2 4-6 6-3 10 1 1.500 1 2 0 3M20 10c-3 2-3 3-2 5s0 2-1 3" fill="none" stroke="#e46a24" strokeWidth="1.700" />
          <path d="M8 19c4 1.500 10 1.500 14 0M9 22c4 1.500 8 1.500 12 0M10 25c3 1.200 7 1.200 10 0M6 27c5 3 15 3 20 0M22 19c5-1 4 4-1 4" fill="none" stroke="#4c708c" strokeWidth="1.500" />
        </Svg>
      </Task>
      <div className="flex-1" />
      <div className="flex items-center gap-[5px]">
        <Svg w={18} h={14}>
          <path d="M1 5.500h15v7H1z" fill="#cfd4d8" stroke="#636c76" /><path d="M3 7.500h11M3 9.500h11M5 11.500h7" stroke="#636c76" strokeDasharray="1 1" /><path d="M8 5c0-3 5 0 6-4" fill="none" stroke="#636c76" />
        </Svg>
        <span className="flex size-4 items-center justify-center rounded-full border border-[#d0d8ec] bg-[#1424b8] text-[12px] font-bold text-white">?</span>
        <Svg w={12} h={24} className="ml-[3px]">
          <path d="M4.500 2.500h5v3h-5zM1.500 4.500h6v3h-6z" fill="#8498b0" stroke="#fff" /><path d="M2 16h6l-3 3z" fill="#fff" />
        </Svg>
        <Svg w={10} h={6} className="ml-2"><path d="M1 5.500L5 1l4 4.500z" fill="#fff" stroke="#607080" strokeWidth=".5" /></Svg>
        <span className="ml-[6px]"><Penguin /></span>
        <span className="flex h-[39px] w-6 items-center justify-center bg-gradient-to-b from-[#42566c] to-[#a8c4e0]"><Penguin /></span>
        <Svg><circle cx="8" cy="8" r="7.500" fill="#f4d81c" /><path d="M1 5a7.500 7.500 0 0 1 14 0c-4-2-9 0-14 0z" fill="#8ccc34" /><circle cx="8" cy="8" r="5" fill="#2c9c2c" /><path d="M8 4.500v7M4.500 8h7" stroke="#fff" strokeWidth="2" /></Svg>
        <Svg w={18} h={18} className="ml-[2px]"><path d="M1 2v4h5V2M3.500 6v6h4" fill="none" stroke="#fff" strokeWidth="1.500" /><path d="M7.500 3.500h8v12h-8z" fill="#9ca8b4" stroke="#303c48" /><path d="M11 6l4 5-3 6-3-4z" fill="#f4d02c" stroke="#806818" /></Svg>
      </div>
      <time className="w-[74px] pt-1 text-center font-['Noto_Sans',sans-serif] leading-[18px] text-white">20:01<br />2020/12/30</time>
      <button type="button" aria-label="显示桌面" className="h-[39px] w-[14px] border border-[#54657a] bg-gradient-to-b from-[#b8c8d8] to-[#7e92a8]" />
      <div className="pointer-events-none absolute right-0 -bottom-px font-['Liberation_Mono',monospace] text-[21px] leading-[24px] text-[#c4c8d0] [-webkit-text-stroke:1px_#7c7c88]">
        www.chinaqking.com
      </div>
    </footer>
  );
}

export default function App() {
  return (
    <div className="flex h-screen min-h-[640px] flex-col overflow-hidden bg-[#f0f0f0] font-['Liberation_Sans','Noto_Sans_CJK_SC',sans-serif] text-[12px] leading-4 text-black">
      <TitleBar />
      <nav className="flex h-[21px] shrink-0 items-center gap-[10px] border-b border-[#a8a8a8] bg-gradient-to-b from-white from-20% via-[#e4e8f4] via-40% to-[#d3daed] pl-[3px] font-['Noto_Sans','Noto_Sans_CJK_SC',sans-serif]">
        {["文件(F)", "设置(C)", "数据(D)", "关于(A)"].map((t) => <button type="button" key={t}>{t}</button>)}
      </nav>
      <Toolbar />
      <main className="flex min-h-0 flex-1">
        <Tree />
        <div className="flex w-3 shrink-0 flex-col items-center pt-1">
          <Svg w={6} h={24}><path d="M6 0v11L0 5.500zM0 12v11l6-5.500z" /></Svg>
        </div>
        <section className="flex min-w-0 flex-1 flex-col border-t-2 border-l-2 border-[#696969]">
          <div className="border-b border-[#696969] bg-white pr-[3px] pb-px"><PointTable /></div>
          <form className="flex h-[27px] shrink-0 items-center gap-[3px]">
            <div className="flex min-w-0 flex-1 items-center">
              <Grip />
              <label htmlFor="point" className="w-[37px] shrink-0 whitespace-nowrap">测点：</label>
              <input id="point" className="h-[26px] min-w-0 flex-1 border border-[#abadb3] bg-white" />
            </div>
            <When id="from" label="开始：" value={"2020-04-13\u00a0\u00a0\u00a0\u00a0\u00a0\u00a0\u00a014:00:00"} />
            <When id="to" label="结束：" value={"2020-04-13\u00a0\u00a0\u00a0\u00a0\u00a0\u00a0\u00a019:00:00"} />
            <button type="button" className="mr-[8px] shrink-0">查询</button>
          </form>
          <Chart />
        </section>
      </main>
      <Taskbar />
    </div>
  );
}
